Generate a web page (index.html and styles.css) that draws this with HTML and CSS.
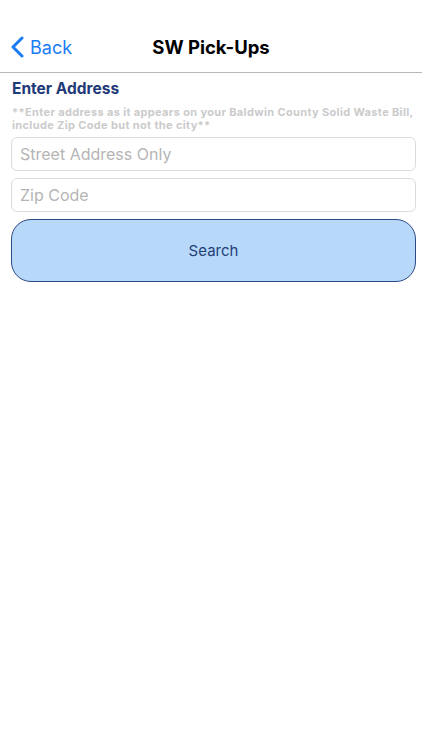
FILE: index.html
```html
<!DOCTYPE html>
<html>
<head>
<meta charset="utf-8">
<link rel="stylesheet" href="styles.css">
</head>
<body>
<div class="app">
  <header class="nav">
    <a class="back">
      <svg class="chev" width="14" height="22" viewBox="0 0 14 22"><path d="M12 2 L3 11 L12 20" fill="none" stroke="#1a7cf5" stroke-width="3" stroke-linecap="round" stroke-linejoin="round"/></svg>
      <span>Back</span>
    </a>
    <h1 class="title">SW Pick-Ups</h1>
  </header>
  <main class="content">
    <h2 class="heading">Enter Address</h2>
    <p class="hint">**Enter address as it appears on your Baldwin County Solid Waste Bill, include Zip Code but not the city**</p>
    <input class="field" type="text" placeholder="Street Address Only">
    <input class="field" type="text" placeholder="Zip Code">
    <button class="search">Search</button>
  </main>
</div>
</body>
</html>
```
FILE: styles.css
```css
* { box-sizing: border-box; }
html, body { margin: 0; padding: 0; background: #fff; }
body { font-family: Inter, Roboto, "Noto Sans", sans-serif; width: 422px; height: 750px; }
.app { display: flex; flex-direction: column; }
.nav {
  position: relative;
  height: 73px;
  border-bottom: 1px solid #b8b8b8;
  display: flex;
  align-items: center;
  padding-top: 22px;
  padding-left: 10px;
}
.back { display: flex; align-items: center; gap: 6px; color: #1a7cf5; font-size: 18px; }
.chev { display: block; }
.title {
  position: absolute;
  left: 0; right: 0;
  top: 22px; bottom: 0;
  margin: 0;
  display: flex; align-items: center; justify-content: center;
  font-size: 18.5px; font-weight: 700; color: #000;
  pointer-events: none;
}
.content { display: flex; flex-direction: column; padding: 6px 6px 0 11px; }
.heading { margin: 0; font-size: 15.5px; font-weight: 700; color: #1f3a78; line-height: 20px; padding-left: 1px; }
.hint { margin: 7px 0 0 1px; font-size: 11px; font-weight: 700; color: #cbcbcb; line-height: 13px; letter-spacing: 0.35px; }
.field {
  margin-top: 5px;
  height: 34px;
  border: 1px solid #dcdcdc;
  border-radius: 6px;
  padding: 0 8px;
  font-family: inherit;
  font-size: 16px;
  color: #333;
  outline: none;
}
.field + .field { margin-top: 7px; }
.field::placeholder { color: #b5b5b5; }
.search {
  margin-top: 7px;
  height: 63px;
  border: 1px solid #2b4a86;
  border-radius: 20px;
  background: #b7d8f8;
  color: #233f78;
  font-family: inherit;
  font-size: 15px;
}
```
